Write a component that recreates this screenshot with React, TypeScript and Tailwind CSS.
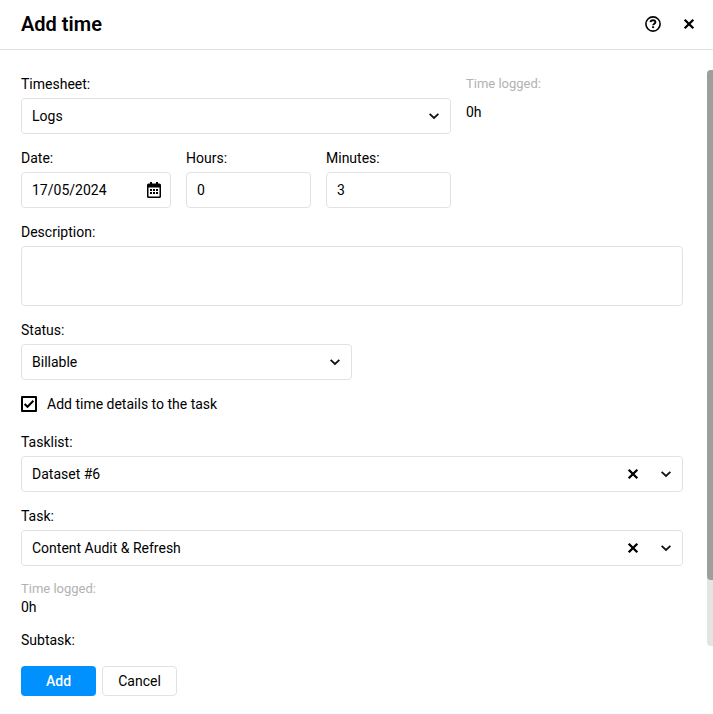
import { useState } from "react";
import type { ReactNode, SelectHTMLAttributes } from "react";

const fieldStyle =
	"h-9 w-full rounded border border-[#e2e2e2] bg-white px-2.5 text-black outline-none focus:border-[#0091ff]";

function ChevronIcon() {
	return (
		<svg width="10" height="8" viewBox="0 0 10 8" fill="none" aria-hidden="true">
			<path d="M.6 1.800 5 6l4.400-4.200" stroke="#111" strokeWidth="1.800" />
		</svg>
	);
}

function CrossIcon() {
	return (
		<svg width="12" height="12" viewBox="0 0 12 12" fill="none" aria-hidden="true">
			<path d="m1.700 1.700 8.600 8.600m0-8.600-8.600 8.600" stroke="#000" strokeWidth="2.300" />
		</svg>
	);
}

function HelpIcon() {
	return (
		<svg width="16" height="16" viewBox="0 0 16 16" fill="none" aria-hidden="true">
			<circle cx="8" cy="8" r="7.1" stroke="#000" strokeWidth="1.6" />
			<path
				d="M5.500 6.200c.2-1.300 1.200-2 2.500-2 1.400 0 2.400.8 2.400 2 0 1.500-2.300 1.500-2.300 3.100"
				stroke="#000"
				strokeWidth="1.900"
			/>
			<rect x="7.1" y="10.3" width="2" height="1.800" fill="#000" />
		</svg>
	);
}

function CalendarIcon() {
	return (
		<svg width="14" height="16" viewBox="0 0 14 16" aria-hidden="true">
			<path
				fillRule="evenodd"
				d="M3 0h2v1.500h4V0h2v1.500h1.400A1.600 1.600 0 0 1 14 3.100v11.300a1.600 1.600 0 0 1-1.600 1.600H1.600A1.600 1.600 0 0 1 0 14.400V3.100a1.600 1.600 0 0 1 1.600-1.600H3V0ZM1.500 5.500v8.500a.5.5 0 0 0 .5.5h10a.5.5 0 0 0 .5-.5V5.500h-11Z"
			/>
			<path d="M3 7h2v2H3zM6 7h2v2H6zM9 7h2v2H9zM3 10h2v2H3zM6 10h2v2H6zM9 10h2v2H9z" />
		</svg>
	);
}

interface FieldProps {
	id: string;
	label: string;
	className?: string;
	children: ReactNode;
}

function Field({ id, label, className = "", children }: FieldProps) {
	return (
		<div className={`flex flex-col gap-1.5 ${className}`}>
			<label htmlFor={id} className="leading-4">
				{label}
			</label>
			{children}
		</div>
	);
}

interface SelectProps extends SelectHTMLAttributes<HTMLSelectElement> {
	option: string;
	onClear?: () => void;
}

function Select({ option, onClear, ...props }: SelectProps) {
	return (
		<div className="relative">
			<select {...props} className={`${fieldStyle} appearance-none`}>
				<option value={option}>{option}</option>
				<option value="" hidden />
			</select>

			<div className="pointer-events-none absolute inset-y-0 right-3 flex items-center gap-[22px]">
				{onClear && (
					<button
						type="button"
						aria-label="Clear"
						onClick={onClear}
						className="pointer-events-auto"
					>
						<CrossIcon />
					</button>
				)}
				<ChevronIcon />
			</div>
		</div>
	);
}

export default function App() {
	const [date, setDate] = useState("17/05/2024");
	const [hours, setHours] = useState("0");
	const [minutes, setMinutes] = useState("3");
	const [addDetails, setAddDetails] = useState(true);
	const [tasklist, setTasklist] = useState("Dataset #6");
	const [task, setTask] = useState("Content Audit & Refresh");

	return (
		<form
			onSubmit={(e) => e.preventDefault()}
			className="min-h-screen bg-white font-[Roboto,sans-serif] text-sm text-black"
		>
			{/* HEADER */}
			<header className="flex items-center justify-between border-b border-[#e2e2e2] pt-2.5 pr-[18px] pb-[11px] pl-[21px]">
				<h1 className="text-xl leading-7 font-semibold">Add time</h1>

				<div className="flex items-center gap-[22px]">
					<button type="button" aria-label="Help">
						<HelpIcon />
					</button>
					<button type="button" aria-label="Close">
						<CrossIcon />
					</button>
				</div>
			</header>

			{/* FIELDS */}
			<div className="mt-5 flex justify-between">
				<div className="flex-1 pt-1.5 pr-6 pl-[21px]">
					<div className="grid grid-cols-[150fr_125fr_125fr_217fr] gap-x-[15px] gap-y-4">
						<Field id="timesheet" label="Timesheet:" className="col-span-3">
							<Select id="timesheet" option="Logs" />
						</Field>

						<div>
							<p className="text-[13px] leading-4 text-[#b2b2b2]">Time logged:</p>
							<p className="mt-3 leading-4">0h</p>
						</div>

						<Field id="date" label="Date:">
							<div className="relative">
								<input
									id="date"
									value={date}
									onChange={(e) => setDate(e.target.value)}
									className={fieldStyle}
								/>
								<button
									type="button"
									aria-label="Open calendar"
									className="absolute inset-y-0 right-2.5"
								>
									<CalendarIcon />
								</button>
							</div>
						</Field>

						<Field id="hours" label="Hours:">
							<input
								id="hours"
								value={hours}
								onChange={(e) => setHours(e.target.value)}
								className={fieldStyle}
							/>
						</Field>

						<Field id="minutes" label="Minutes:">
							<input
								id="minutes"
								value={minutes}
								onChange={(e) => setMinutes(e.target.value)}
								className={fieldStyle}
							/>
						</Field>
					</div>

					<Field id="description" label="Description:" className="mt-4">
						<textarea
							id="description"
							className="block h-15 w-full resize-none rounded border border-[#e2e2e2] px-2.5 py-2 outline-none focus:border-[#0091ff]"
						/>
					</Field>

					<Field id="status" label="Status:" className="mt-4 w-1/2">
						<Select id="status" option="Billable" />
					</Field>

					<label className="mt-4 flex items-center gap-2.5 leading-4">
						<span className="relative size-4">
							<input
								type="checkbox"
								checked={addDetails}
								onChange={(e) => setAddDetails(e.target.checked)}
								className="block size-4 appearance-none rounded-[1px] border-2 border-black"
							/>
							{addDetails && (
								<svg
									viewBox="0 0 16 16"
									fill="none"
									aria-hidden="true"
									className="pointer-events-none absolute inset-0 size-4"
								>
									<path d="m3.600 8 2.900 2.800 5.900-6" stroke="#000" strokeWidth="2" />
								</svg>
							)}
						</span>
						Add time details to the task
					</label>

					<Field id="tasklist" label="Tasklist:" className="mt-[22px]">
						<Select
							id="tasklist"
							option="Dataset #6"
							value={tasklist}
							onChange={(e) => setTasklist(e.target.value)}
							onClear={() => setTasklist("")}
						/>
					</Field>

					<Field id="task" label="Task:" className="mt-4">
						<Select
							id="task"
							option="Content Audit & Refresh"
							value={task}
							onChange={(e) => setTask(e.target.value)}
							onClear={() => setTask("")}
						/>
					</Field>

					<div className="mt-3.5 leading-[18px]">
						<p className="text-[13px] text-[#b2b2b2]">Time logged:</p>
						<p>0h</p>
					</div>

					<p className="mt-4 leading-4">Subtask:</p>
				</div>

				{/* SCROLLBAR */}
				<div className="mb-0.5 w-1.5 rounded-l bg-[#e4e4e4]">
					<div className="h-[88.5%] rounded-l bg-[#9e9e9e]" />
				</div>
			</div>

			{/* ACTIONS */}
			<footer className="flex gap-1.5 py-[18px] pl-[21px]">
				<button
					type="submit"
					className="h-[30px] w-[75px] rounded bg-[#0091ff] font-medium text-white"
				>
					Add
				</button>
				<button
					type="button"
					className="h-[30px] w-[75px] rounded border border-[#e2e2e2] bg-white"
				>
					Cancel
				</button>
			</footer>
		</form>
	);
}
